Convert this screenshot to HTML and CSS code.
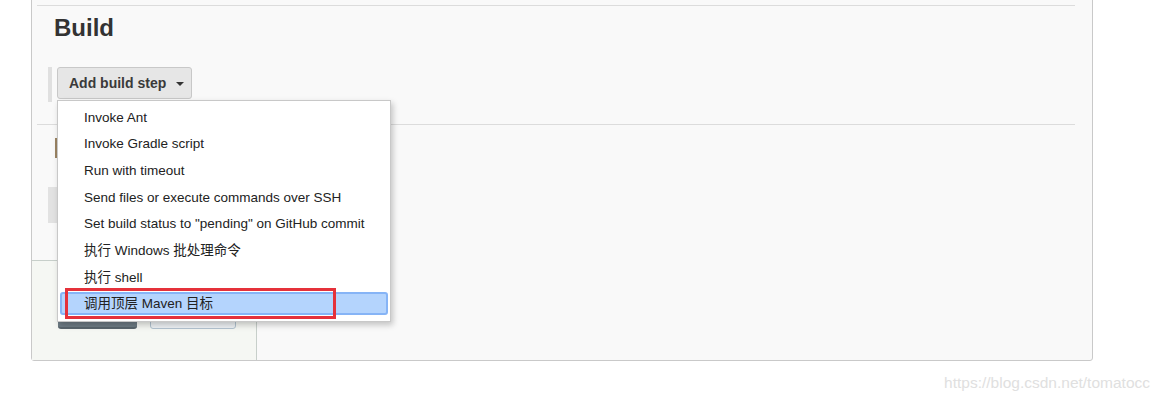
FILE: index.html
```html
<!DOCTYPE html>
<html>
<head>
<meta charset="utf-8">
<link rel="stylesheet" href="styles.css">
</head>
<body>
<div class="panel">
  <div class="section build">
    <h2 class="title">Build</h2>
    <div class="step-group">
      <span class="stripe"></span>
      <div class="dropdown">
        <button class="btn">Add build step<span class="caret"></span></button>
        <ul class="menu">
          <li class="item">Invoke Ant</li>
          <li class="item">Invoke Gradle script</li>
          <li class="item">Run with timeout</li>
          <li class="item">Send files or execute commands over SSH</li>
          <li class="item">Set build status to "pending" on GitHub commit</li>
          <li class="item">执行 Windows 批处理命令</li>
          <li class="item">执行 shell</li>
          <li class="item active">调用顶层 Maven 目标<span class="annot"></span></li>
        </ul>
      </div>
    </div>
  </div>
  <div class="section post">
    <span class="brown-mark"></span>
    <span class="gray-block"></span>
  </div>
  <div class="bottom-bar">
    <span class="bb-btn primary"></span>
    <span class="bb-btn secondary"></span>
  </div>
</div>
<div class="watermark">https://blog.csdn.net/tomatocc</div>
</body>
</html>
```
FILE: styles.css
```css
* { box-sizing: border-box; }
html, body { margin: 0; padding: 0; background: #fff; }
body {
  font-family: "Liberation Sans", Arial, "Noto Sans CJK SC", sans-serif;
  color: #333;
  width: 1159px;
  height: 401px;
  overflow: hidden;
}
.panel {
  position: relative;
  margin: -10px 0 0 31px;
  width: 1062px;
  height: 371px;
  background: #f9f9f9;
  border: 1px solid #c9c9c9;
  border-radius: 3px;
  padding: 14px 17px 0 5px;
}
.section {
  border-top: 1px solid #dcdcdc;
  padding-left: 11px;
}
.title {
  margin: 8px 0 0 0;
  padding-left: 6px;
  font-size: 24px;
  line-height: 28px;
  font-weight: bold;
  color: #333;
}
.step-group {
  display: flex;
  align-items: flex-start;
  gap: 5px;
  margin-top: 25px;
  height: 35px;
  margin-bottom: 22px;
}
.stripe {
  width: 4px;
  height: 35px;
  background: #e0e0e0;
}
.dropdown { position: relative; }
.btn {
  display: flex;
  align-items: center;
  height: 32px;
  width: 135px;
  padding: 0 0 0 11px;
  border: 1px solid #c8c8c8;
  border-radius: 3px;
  background: #e6e6e6;
  font-family: "Liberation Sans", Arial, sans-serif;
  font-size: 14px;
  font-weight: bold;
  color: #3a3a3a;
}
.caret {
  margin-left: 10px;
  width: 0;
  height: 0;
  border-left: 4px solid transparent;
  border-right: 4px solid transparent;
  border-top: 4px solid #333;
  margin-top: 2px;
}
.menu {
  position: absolute;
  left: 0;
  top: 33px;
  z-index: 10;
  width: 334px;
  margin: 0;
  padding: 4.5px 2px 6px 2px;
  list-style: none;
  background: #fff;
  border: 1px solid #c8c8c8;
  box-shadow: 2px 3px 6px rgba(0,0,0,0.22);
  display: flex;
  flex-direction: column;
  gap: 3.7px;
}
.item {
  position: relative;
  height: 23px;
  line-height: 19px;
  padding-left: 22px;
  border: 2px solid transparent;
  border-radius: 3px;
  font-size: 13.5px;
  color: #222;
  white-space: nowrap;
}
.item.active {
  background: #b4d4fd;
  border-color: #86b4f6;
}
.annot {
  position: absolute;
  left: 3px;
  top: -6px;
  width: 271px;
  height: 31px;
  border: 3px solid #e5313a;
}
.post {
  position: relative;
  height: 140px;
}
.brown-mark {
  display: block;
  margin: 13px 0 0 7px;
  width: 2px;
  height: 20px;
  background: #9b8463;
}
.gray-block {
  display: block;
  margin: 29px 0 0 0;
  width: 9px;
  height: 36px;
  background: #e2e2e2;
}
.bottom-bar {
  position: absolute;
  left: 0;
  bottom: 0;
  width: 225px;
  height: 100px;
  background: #f5f7f3;
  border-top: 1px solid #c7cfca;
  border-right: 1px solid #c7cfca;
  z-index: 1;
}
.bb-btn {
  position: absolute;
  top: 35px;
  height: 33px;
  border-radius: 3px;
}
.bb-btn.primary {
  left: 26px;
  width: 79px;
  background: #6e7c85;
  border-bottom: 2px solid #59656d;
}
.bb-btn.secondary {
  left: 118px;
  width: 86px;
  background: #eef2f5;
  border: 1px solid #b2c3d0;
}
.watermark {
  margin-top: 13px;
  padding-right: 9px;
  text-align: right;
  font-size: 15.5px;
  line-height: 18px;
  color: #e0e0e0;
}
```
